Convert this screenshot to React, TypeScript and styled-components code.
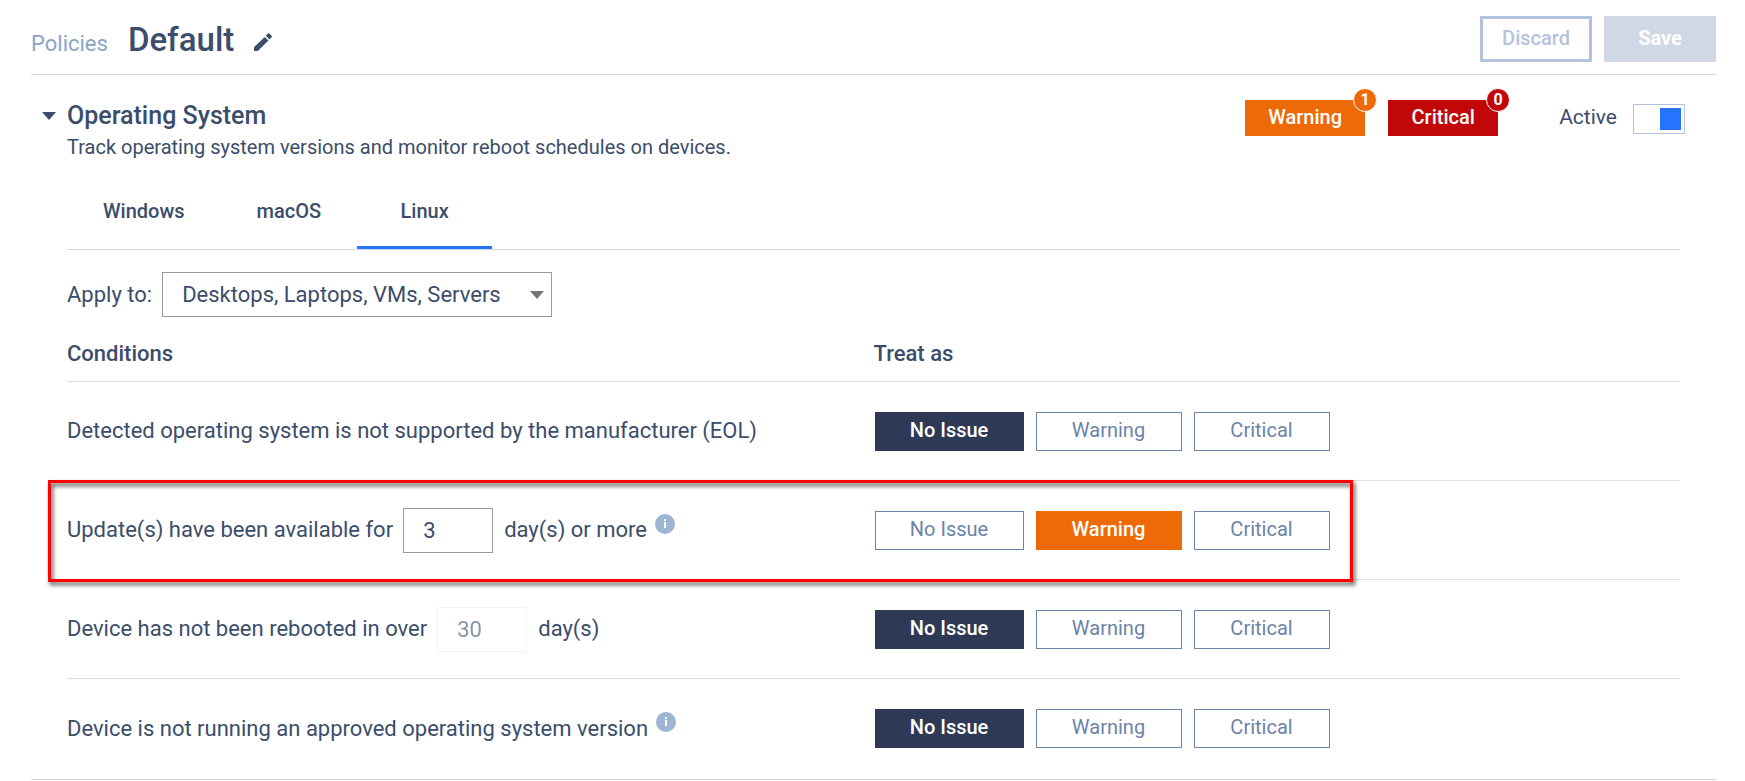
import React, { useState } from "react";
import styled, { createGlobalStyle, css } from "styled-components";

const color = {
  text: "#3b4d6b",
  muted: "#8aa4c8",
  line: "#d0d7e4",
  rowLine: "#dcdfe3",
  blue: "#2673ff",
  navy: "#2e3a55",
  orange: "#ee6a06",
  red: "#c10707",
  outline: "#6b83a8",
};

const GlobalStyle = createGlobalStyle`
  *, *::before, *::after { box-sizing: border-box; }
  body {
    margin: 0;
    background: #fff;
    color: ${color.text};
    font-family: Roboto, "Liberation Sans", sans-serif;
    font-size: 22px;
    line-height: 28px;
  }
  button, input, select { font: inherit; color: inherit; }
`;

const Page = styled.main`
  padding: 0 29px 0 31px;
`;

const Header = styled.header`
  display: flex;
  align-items: flex-start;
  justify-content: space-between;
  height: 75px;
  padding-top: 16px;
  border-bottom: 1px solid ${color.line};
`;

const Breadcrumb = styled.nav`
  display: flex;
  align-items: baseline;
  gap: 20px;
  padding-top: 4px;
`;

const Crumb = styled.a`
  color: ${color.muted};
  text-decoration: none;
`;

const PolicyName = styled.h1`
  margin: 0;
  font-size: 33px;
  line-height: 40px;
  font-weight: 500;
`;

const IconButton = styled.button`
  display: inline-flex;
  padding: 0;
  border: 0;
  background: none;
  cursor: pointer;
`;

const Actions = styled.div`
  display: flex;
  gap: 12px;
`;

const ActionButton = styled.button<{ $filled?: boolean }>`
  width: 112px;
  height: 46px;
  padding: 0 0 2px;
  border: 3px solid ${(p) => (p.$filled ? "#d1d8e5" : "#b4c3dd")};
  background: ${(p) => (p.$filled ? "#d1d8e5" : "#fff")};
  color: ${(p) => (p.$filled ? "#fff" : "#b4c3dd")};
  font-size: 20px;
  font-weight: ${(p) => (p.$filled ? 700 : 500)};
`;

const Section = styled.section`
  padding: 25px 36px 1px;
  border-bottom: 1px solid ${color.line};
`;

const SectionHead = styled.div`
  display: flex;
  justify-content: space-between;
  margin: 0 -5px 0 -25px;
`;

const Heading = styled.div`
  display: grid;
  grid-template-columns: 14px auto;
  column-gap: 11px;
  align-items: center;
`;

const SectionTitle = styled.h2`
  margin: 0;
  font-size: 25px;
  line-height: 32px;
  font-weight: 500;
`;

const Description = styled.p`
  grid-column: 2;
  margin: 0;
  font-size: 20px;
  line-height: 30px;
`;

const Summary = styled.div`
  display: flex;
  align-items: flex-start;
`;

const Count = styled.div<{ $bg: string; $width: number }>`
  position: relative;
  width: ${(p) => p.$width}px;
  height: 36px;
  margin-right: 23px;
  background: ${(p) => p.$bg};
  color: #fff;
  font-size: 20px;
  font-weight: 500;
  line-height: 34px;
  text-align: center;
`;

const Bubble = styled.span<{ $bg: string }>`
  position: absolute;
  top: -12px;
  right: -12px;
  width: 24px;
  height: 24px;
  border: 1px solid #fff;
  border-radius: 50%;
  background: ${(p) => p.$bg};
  font-size: 16px;
  font-weight: 700;
  line-height: 22px;
`;

const ActiveLabel = styled.label`
  display: flex;
  align-items: flex-start;
  gap: 16px;
  margin-left: 38px;
  font-size: 21px;
  line-height: 34px;
`;

const Toggle = styled.input`
  appearance: none;
  display: flex;
  align-items: center;
  width: 52px;
  height: 30px;
  margin: 4px 0 0;
  padding: 3px;
  border: 1px solid #b4c3dd;
  background: #fff;
  &::before {
    content: "";
    width: 21px;
    height: 22px;
    background: #b4c3dd;
  }
  &:checked { justify-content: flex-end; }
  &:checked::before { background: ${color.blue}; }
`;

const Tabs = styled.div`
  display: flex;
  height: 63px;
  margin-top: 25px;
  border-bottom: 1px solid ${color.line};
`;

const Tab = styled.button<{ $selected: boolean }>`
  min-width: 135px;
  padding: 0 36px 12px;
  border: 0;
  border-bottom: 3px solid ${(p) => (p.$selected ? color.blue : "transparent")};
  background: none;
  font-size: 20px;
  font-weight: 500;
`;

const ApplyRow = styled.div`
  display: flex;
  align-items: center;
  gap: 10px;
  margin-top: 22px;
`;

const SelectBox = styled.div`
  position: relative;
  width: 390px;
  svg {
    position: absolute;
    top: 19px;
    right: 8px;
    pointer-events: none;
  }
`;

const Select = styled.select`
  appearance: none;
  width: 100%;
  height: 45px;
  padding: 0 36px 0 19px;
  border: 1px solid #999;
  border-radius: 0;
  background: #fff;
`;

const Conditions = styled.table`
  width: 100%;
  margin-top: 18px;
  border-collapse: separate;
  border-spacing: 0;
  table-layout: fixed;
`;

const HeadCell = styled.th`
  height: 47px;
  padding: 0 0 8px;
  border-bottom: 1px solid ${color.rowLine};
  font-weight: 500;
  text-align: left;
`;

const Row = styled.tr`
  position: relative;
  &:not(:last-child) td { border-bottom: 1px solid ${color.rowLine}; }
`;

const Cell = styled.td`
  height: 99px;
  padding: 0;
`;

const Condition = styled.div`
  display: flex;
  align-items: center;
`;

const Days = styled.input`
  width: 90px;
  height: 45px;
  margin: 0 11px 0 10px;
  padding: 0 19px;
  border: 1px solid #999;
  background: #fff;
  &:disabled { opacity: 0.6; border-color: #eee; }
`;

const InfoButton = styled(IconButton)`
  margin: -13px 0 0 8px;
`;

const Choices = styled.div`
  display: flex;
  gap: 12px;
  padding-left: 1px;
`;

const levelColor = { none: color.navy, warning: color.orange, critical: color.red };
const levelWidth = { none: 149, warning: 146, critical: 136 };
type Level = keyof typeof levelColor;

const Choice = styled.button<{ $level: Level; $on: boolean }>`
  width: ${(p) => levelWidth[p.$level]}px;
  height: 39px;
  padding: 0 0 3px;
  border: 1px solid ${color.outline};
  background: #fff;
  color: ${color.outline};
  font-size: 20px;
  ${(p) =>
    p.$on &&
    css`
      border-color: ${levelColor[p.$level]};
      background: ${levelColor[p.$level]};
      color: #fff;
      font-weight: 500;
    `}
`;

const Highlight = styled.div`
  position: absolute;
  top: -1px;
  bottom: -2px;
  left: -19px;
  width: calc(50% + 498px);
  border: 3px solid #f00;
  filter: drop-shadow(2px 3px 2px rgba(0, 0, 0, 0.7));
  pointer-events: none;
`;

const Caret = ({ fill }: { fill: string }) => (
  <svg width="14" height="8" viewBox="0 0 14 8" aria-hidden="true">
    <path d="M0 0h14L7 8z" fill={fill} />
  </svg>
);

const Pencil = () => (
  <svg width="18" height="18" viewBox="0 0 18 18" aria-hidden="true">
    <path
      d="M0 14.2V18h3.800L14.500 7.600 10.700 4zM17.600 4.300c.5-.5.5-1 0-1.500L15.300.5c-.5-.5-1-.5-1.500 0l-2 2.300 3.700 3.700z"
      fill={color.text}
    />
  </svg>
);

const Info = () => (
  <InfoButton type="button" aria-label="More information">
    <svg width="20" height="20" viewBox="0 0 20 20" aria-hidden="true">
      <circle cx="10" cy="10" r="10" fill="#9db4d2" />
      <path d="M9 8h2v6H9zM9 5h2v2H9z" fill="#fff" />
    </svg>
  </InfoButton>
);

const levels: { id: Level; label: string }[] = [
  { id: "none", label: "No Issue" },
  { id: "warning", label: "Warning" },
  { id: "critical", label: "Critical" },
];

function ConditionRow(props: { initial: Level; highlighted?: boolean; children: React.ReactNode }) {
  const [level, setLevel] = useState<Level>(props.initial);
  return (
    <Row>
      <Cell>
        <Condition>{props.children}</Condition>
        {props.highlighted && <Highlight />}
      </Cell>
      <Cell>
        <Choices role="group" aria-label="Treat as">
          {levels.map((l) => (
            <Choice
              key={l.id}
              type="button"
              $level={l.id}
              $on={l.id === level}
              aria-pressed={l.id === level}
              onClick={() => setLevel(l.id)}
            >
              {l.label}
            </Choice>
          ))}
        </Choices>
      </Cell>
    </Row>
  );
}

export default function App() {
  const [tab, setTab] = useState("Linux");
  return (
    <>
      <GlobalStyle />
      <Page>
        <Header>
          <Breadcrumb>
            <Crumb href="#policies">Policies</Crumb>
            <PolicyName>Default</PolicyName>
            <IconButton type="button" aria-label="Rename policy">
              <Pencil />
            </IconButton>
          </Breadcrumb>
          <Actions>
            <ActionButton type="button">Discard</ActionButton>
            <ActionButton type="button" $filled>
              Save
            </ActionButton>
          </Actions>
        </Header>
        <Section>
          <SectionHead>
            <Heading>
              <IconButton type="button" aria-label="Collapse section">
                <Caret fill={color.text} />
              </IconButton>
              <SectionTitle>Operating System</SectionTitle>
              <Description>
                Track operating system versions and monitor reboot schedules on devices.
              </Description>
            </Heading>
            <Summary>
              <Count $bg={color.orange} $width={120}>
                Warning<Bubble $bg={color.orange}>1</Bubble>
              </Count>
              <Count $bg={color.red} $width={110}>
                Critical<Bubble $bg={color.red}>0</Bubble>
              </Count>
              <ActiveLabel>
                Active
                <Toggle type="checkbox" role="switch" defaultChecked />
              </ActiveLabel>
            </Summary>
          </SectionHead>
          <Tabs role="tablist">
            {["Windows", "macOS", "Linux"].map((name) => (
              <Tab
                key={name}
                type="button"
                role="tab"
                aria-selected={tab === name}
                $selected={tab === name}
                onClick={() => setTab(name)}
              >
                {name}
              </Tab>
            ))}
          </Tabs>
          <ApplyRow>
            <label htmlFor="apply-to">Apply to:</label>
            <SelectBox>
              <Select id="apply-to">
                <option>Desktops, Laptops, VMs, Servers</option>
              </Select>
              <Caret fill="#757575" />
            </SelectBox>
          </ApplyRow>
          <Conditions>
            <thead>
              <tr>
                <HeadCell scope="col">Conditions</HeadCell>
                <HeadCell scope="col">Treat as</HeadCell>
              </tr>
            </thead>
            <tbody>
              <ConditionRow initial="none">
                Detected operating system is not supported by the manufacturer (EOL)
              </ConditionRow>
              <ConditionRow initial="warning" highlighted>
                <label htmlFor="update-days">Update(s) have been available for</label>
                <Days id="update-days" defaultValue="3" />
                day(s) or more
                <Info />
              </ConditionRow>
              <ConditionRow initial="none">
                <label htmlFor="reboot-days">Device has not been rebooted in over</label>
                <Days id="reboot-days" defaultValue="30" disabled />
                day(s)
              </ConditionRow>
              <ConditionRow initial="none">
                Device is not running an approved operating system version
                <Info />
              </ConditionRow>
            </tbody>
          </Conditions>
        </Section>
      </Page>
    </>
  );
}
